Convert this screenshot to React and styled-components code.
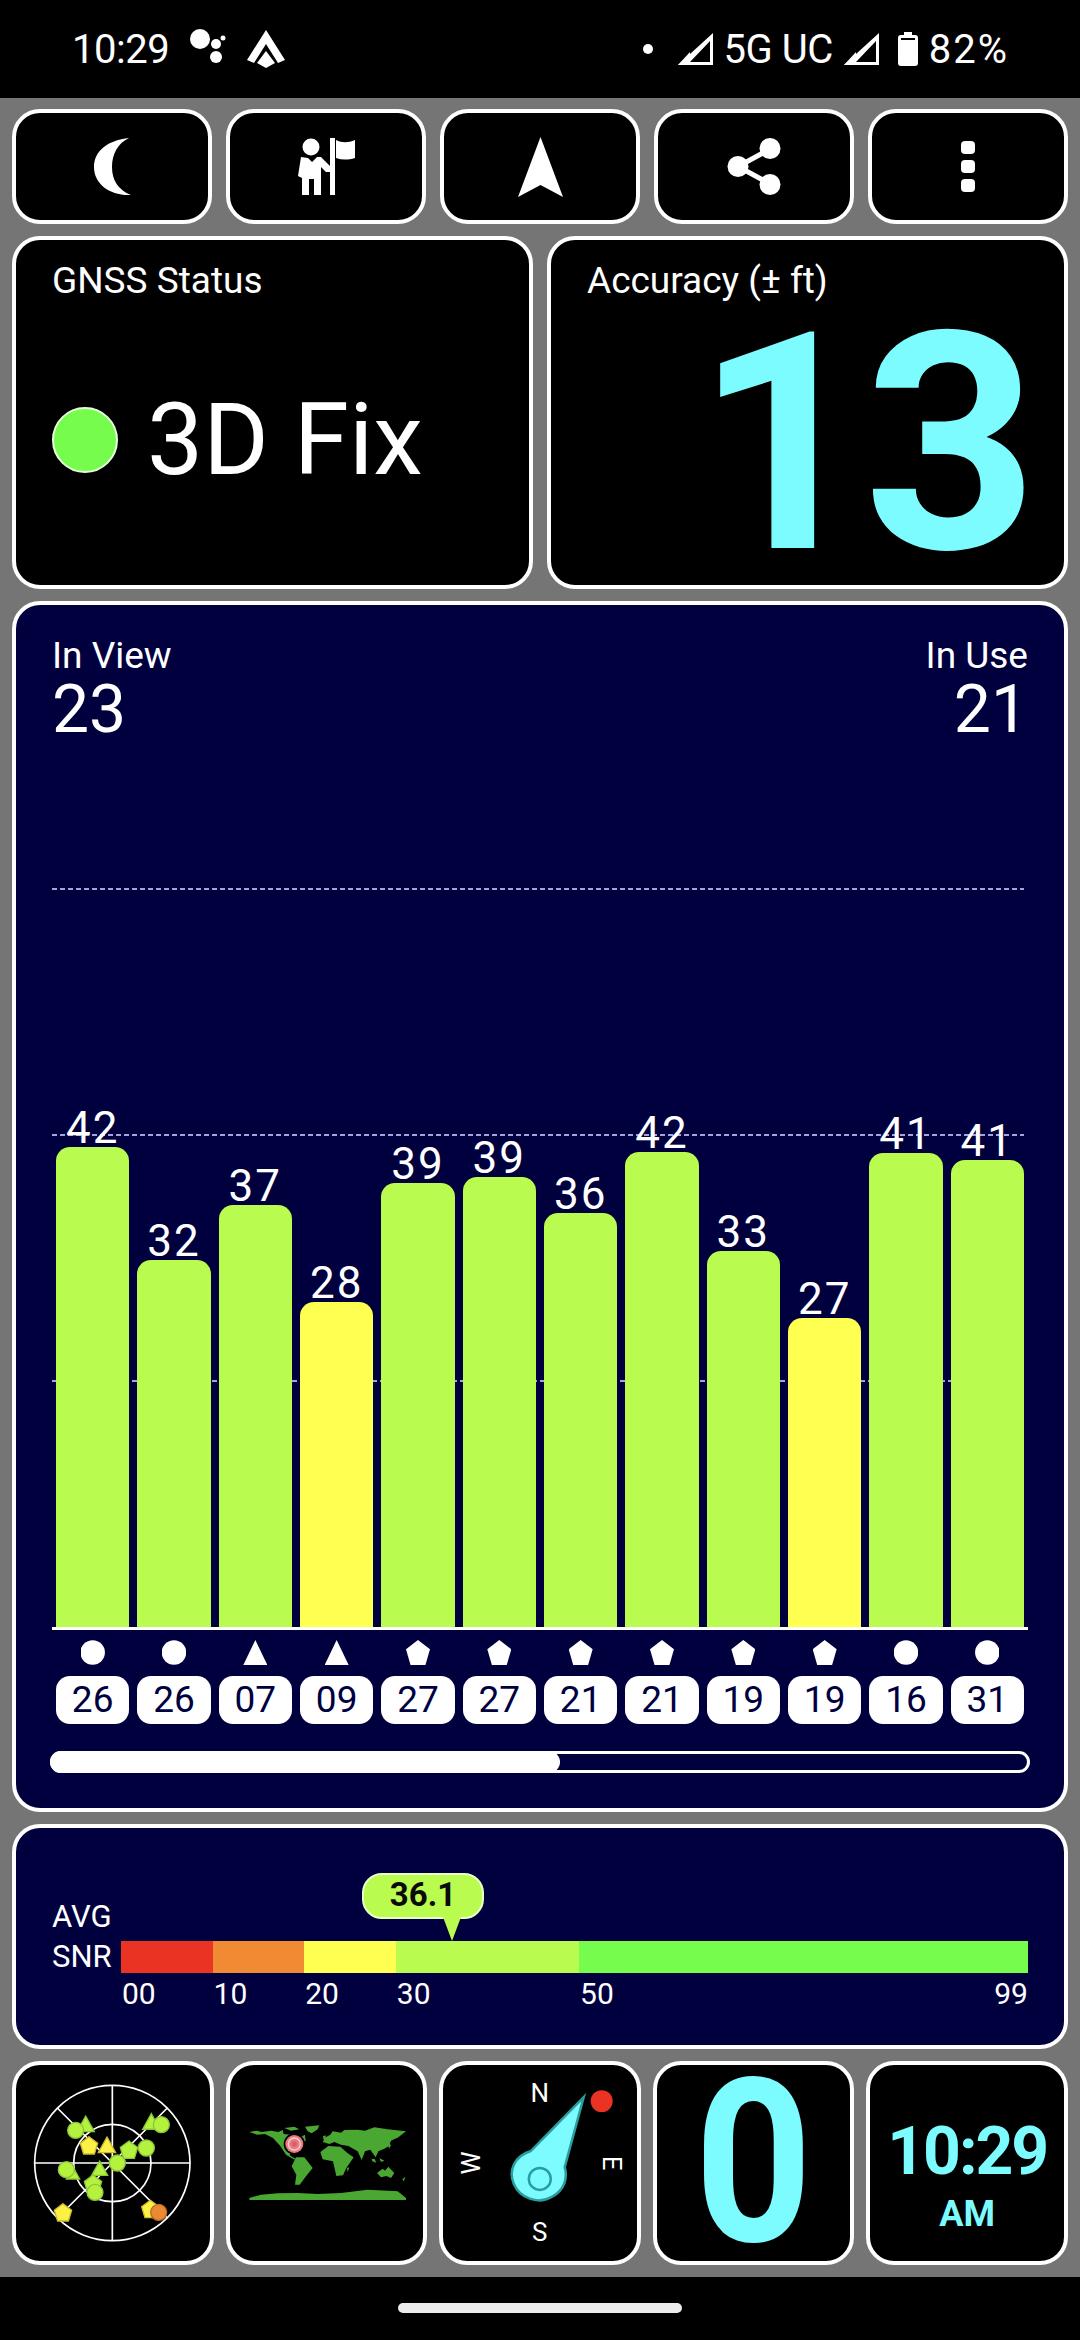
import React from "react"
import styled, { createGlobalStyle } from "styled-components"

const GlobalStyle = createGlobalStyle`
  html, body { margin: 0; padding: 0; background: #000; }
  * { box-sizing: border-box; }
  body { font-family: Roboto, "Liberation Sans", sans-serif; color: #fff; }
`

const Page = styled.div`
  width: 1080px;
  height: 2340px;
  display: flex;
  flex-direction: column;
  background: #000;
`

const StatusBar = styled.div`
  height: 98px;
  flex: none;
  display: flex;
  align-items: center;
  justify-content: space-between;
  padding: 0 71px 0 72px;
  font-size: 40px;
`

const StatusGroup = styled.div`
  display: flex;
  align-items: center;
`

const StatusText = styled.span`
  margin: ${(p) => p.$margin || "0"};
  letter-spacing: ${(p) => p.$spacing || "-0.5px"};
`

const Main = styled.div`
  height: 2179px;
  flex: none;
  display: flex;
  flex-direction: column;
  gap: 12px;
  padding: 11px 12px 12px;
  background: #757575;
`

const Row = styled.div`
  display: grid;
  grid-template-columns: repeat(${(p) => p.$cols}, 1fr);
  grid-template-rows: minmax(0, 1fr);
  gap: ${(p) => p.$gap}px;
  height: ${(p) => p.$height}px;
  flex: none;
`

const Card = styled.div`
  border: 4px solid #fff;
  border-radius: 28px;
  background: #000;
  min-width: 0;
`

const IconCard = styled(Card)`
  display: flex;
  align-items: center;
  justify-content: center;
`

const StatCard = styled(Card)`
  display: flex;
  flex-direction: column;
  padding: 20px 36px 0;
`

const Caption = styled.div`
  font-size: 37px;
  line-height: 42px;
  text-align: ${(p) => p.$align || "left"};
`

const FixRow = styled.div`
  display: flex;
  align-items: center;
  margin-top: 88px;
  gap: 29px;
`

const FixDot = styled.div`
  width: 66px;
  height: 66px;
  border-radius: 50%;
  background: #76fc4c;
  border: 2px solid #e6ffe0;
`

const FixText = styled.div`
  font-size: 100px;
  line-height: 100px;
`

const AccuracyValue = styled.div`
  margin: 27px -4px 0 0;
  font-size: 304px;
  line-height: 230px;
  font-weight: 700;
  text-align: right;
  color: #7dfcff;
  letter-spacing: -6px;
`

const NavyCard = styled(Card)`
  background: #00003f;
`

const ChartCard = styled(NavyCard)`
  height: 1211px;
  flex: none;
  padding: 30px 36px 0;
`

const ChartHeader = styled.div`
  display: flex;
  justify-content: space-between;
`

const Count = styled.div`
  font-size: 66px;
  line-height: 66px;
  text-align: ${(p) => p.$align || "left"};
`

const Plot = styled.div`
  position: relative;
  height: 742px;
  margin-top: 145px;
  padding: 0 4px;
  border-bottom: 3px solid #fff;
  display: grid;
  grid-template-columns: repeat(12, 1fr);
  gap: 8px;
  align-items: end;
`

const GridLine = styled.div`
  position: absolute;
  left: 0;
  right: 4px;
  top: ${(p) => p.$top}px;
  height: 2px;
  background: repeating-linear-gradient(90deg, #a3a3e0 0 5px, transparent 5px 8px);
`

const BarColumn = styled.div`
  position: relative;
  display: flex;
  flex-direction: column;
  align-items: center;
`

const BarValue = styled.div`
  position: relative;
  font-size: 44px;
  line-height: 44px;
  letter-spacing: 2px;
  margin-bottom: -3px;
`

const Bar = styled.div`
  width: 100%;
  height: ${(p) => p.$height}px;
  border-radius: 14px 14px 0 0;
  background: ${(p) => (p.$weak ? "#ffff52" : "#b9fc4f")};
`

const SatGrid = styled.div`
  display: grid;
  grid-template-columns: repeat(12, 1fr);
  gap: 8px;
  padding: 0 4px;
  margin-top: 10px;
`

const Sat = styled.div`
  display: flex;
  flex-direction: column;
  align-items: center;
`

const clips = {
  circle: "circle(50%)",
  triangle: "polygon(50% 0, 100% 100%, 0 100%)",
  pentagon: "polygon(50% 0, 100% 37%, 81% 100%, 19% 100%, 0 37%)",
}

const SatShape = styled.div`
  width: 24px;
  height: 25px;
  background: #fff;
  clip-path: ${(p) => clips[p.$shape]};
`

const SatChip = styled.div`
  width: 100%;
  height: 48px;
  margin-top: 11px;
  border-radius: 14px;
  background: #fff;
  color: #00003f;
  font-size: 37px;
  line-height: 48px;
  text-align: center;
`

const Slider = styled.div`
  height: 22px;
  margin: 27px -2px 0;
  border: 3px solid #fff;
  border-radius: 11px;
`

const SliderFill = styled.div`
  width: 510px;
  height: 22px;
  margin: -3px 0 0 -3px;
  border-radius: 11px;
  background: #fff;
`

const SnrCard = styled(NavyCard)`
  height: 225px;
  flex: none;
  display: flex;
  padding: 73px 36px 0;
`

const SnrLabels = styled.div`
  width: 69px;
  flex: none;
  margin-top: -4px;
  font-size: 31px;
  line-height: 40px;
`

const SnrScale = styled.div`
  position: relative;
  flex: 1;
  display: flex;
  margin-top: 40px;
  height: 70px;
`

const SnrCell = styled.div`
  flex: ${(p) => p.$span};
`

const SnrSwatch = styled.div`
  height: 32px;
  background: ${(p) => p.$color};
`

const SnrTicks = styled.div`
  display: flex;
  justify-content: space-between;
  font-size: 30px;
  line-height: 36px;
  margin-top: 3px;
  padding-left: 1px;
`

const Bubble = styled.div`
  position: absolute;
  left: 241px;
  top: -68px;
  width: 122px;
  height: 46px;
  border-radius: 20px;
  border: 2px solid #eaffc8;
  background: #b9fc4f;
  color: #0a0a0a;
  font-size: 33px;
  font-weight: 700;
  line-height: 40px;
  text-align: center;
  &::after {
    content: "";
    position: absolute;
    left: 79px;
    top: 42px;
    border-style: solid;
    border-width: 24px 9px 0;
    border-color: #b9fc4f transparent transparent;
  }
`

const BigZero = styled.div`
  font-size: 228px;
  line-height: 190px;
  font-weight: 700;
  color: #7dfcff;
  transform: scaleX(0.9);
`

const ClockCard = styled(Card)`
  display: flex;
  flex-direction: column;
  align-items: center;
  color: #7dfcff;
  font-weight: 700;
  padding-top: 51px;
`

const ClockTime = styled.div`
  font-size: 66px;
  line-height: 72px;
  letter-spacing: -2px;
`

const ClockPeriod = styled.div`
  font-size: 36px;
  line-height: 40px;
  margin-top: 6px;
`

const NavBar = styled.div`
  flex: 1;
  display: flex;
  align-items: flex-start;
  justify-content: center;
  padding-top: 26px;
`

const HomeHandle = styled.div`
  width: 284px;
  height: 10px;
  border-radius: 5px;
  background: #ececec;
`

const Moon = () => (
  <svg width="37" height="58" viewBox="0 0 37 58">
    <path fill="#fff" d="M35 0C14 2 0 13 0 29c0 17 16 29 37 28C24 52 18 42 18 29 18 16 24 5 35 0Z" />
  </svg>
)

const PersonFlag = () => (
  <svg width="57" height="58" viewBox="0 0 57 58">
    <circle cx="13" cy="9" r="8.5" fill="#fff" />
    <path fill="#fff" d="M3 19l7 1 4 4 5-5h4l9 9v6l-4 0-5-5v28h-7V41h-5v16H4V40l-4-2Z" />
    <path fill="#fff" d="M32 0h5v57h-5Z" />
    <path fill="#fff" d="M38 2c6 3 12 3 19 0v18c-7 2-13 2-19 0Z" />
  </svg>
)

const NorthArrow = () => (
  <svg width="45" height="60" viewBox="0 0 45 60">
    <path fill="#fff" d="M22.5 0 45 60 22.5 48 0 60Z" />
  </svg>
)

const ShareIcon = () => (
  <svg width="54" height="57" viewBox="0 0 54 57">
    <path stroke="#fff" strokeWidth="5" fill="none" d="M43 11 11 28.5 43 46" />
    <circle cx="43" cy="10.5" r="10.5" fill="#fff" />
    <circle cx="11" cy="28.5" r="10.5" fill="#fff" />
    <circle cx="43" cy="46.5" r="10.5" fill="#fff" />
  </svg>
)

const MoreIcon = () => (
  <svg width="14" height="51" viewBox="0 0 14 51">
    <rect y="0" width="14" height="13" rx="4" fill="#fff" />
    <rect y="19" width="14" height="13" rx="4" fill="#fff" />
    <rect y="38" width="14" height="13" rx="4" fill="#fff" />
  </svg>
)

const AssistantDots = () => (
  <svg width="38" height="40" viewBox="0 0 38 40" style={{ marginLeft: 20 }}>
    <circle cx="11" cy="10" r="10" fill="#fff" />
    <circle cx="27" cy="15" r="5" fill="#fff" />
    <circle cx="34" cy="9" r="2.5" fill="#fff" />
    <circle cx="27" cy="28" r="6" fill="#fff" />
  </svg>
)

const AutoIcon = () => (
  <svg width="38" height="38" viewBox="0 0 38 38" style={{ marginLeft: 20 }}>
    <path fill="#fff" d="M19 0 38 30 31 33 19 14 7 33 0 30Z" />
    <path fill="#fff" d="M19 21 28 33 19 38 10 33Z" />
  </svg>
)

const SignalIcon = () => (
  <svg width="35" height="32" viewBox="0 0 35 32">
    <path fill="#fff" fillRule="evenodd" d="M35 0V32H0ZM32 8 12 29H32Z" />
    <path fill="#fff" d="M0 32 12 19V32Z" />
  </svg>
)

const BatteryIcon = () => (
  <svg width="20" height="34" viewBox="0 0 20 34" style={{ marginLeft: 19 }}>
    <path fill="#fff" d="M6 0h8v3h3a3 3 0 0 1 3 3v25a3 3 0 0 1-3 3H3a3 3 0 0 1-3-3V6a3 3 0 0 1 3-3h3Z" />
    <rect x="3" y="6" width="14" height="2" fill="#000" />
  </svg>
)

const sats = [
  { snr: 42, top: 1147, shape: "circle", id: "26" },
  { snr: 32, top: 1260, shape: "circle", id: "26" },
  { snr: 37, top: 1205, shape: "triangle", id: "07" },
  { snr: 28, top: 1302, shape: "triangle", id: "09", weak: true },
  { snr: 39, top: 1183, shape: "pentagon", id: "27" },
  { snr: 39, top: 1177, shape: "pentagon", id: "27" },
  { snr: 36, top: 1213, shape: "pentagon", id: "21" },
  { snr: 42, top: 1152, shape: "pentagon", id: "21" },
  { snr: 33, top: 1251, shape: "pentagon", id: "19" },
  { snr: 27, top: 1318, shape: "pentagon", id: "19", weak: true },
  { snr: 41, top: 1153, shape: "circle", id: "16" },
  { snr: 41, top: 1160, shape: "circle", id: "31" },
]

const snrBands = [
  { span: 10, color: "#ea3323", ticks: ["00"] },
  { span: 10, color: "#f08a33", ticks: ["10"] },
  { span: 10, color: "#ffff52", ticks: ["20"] },
  { span: 20, color: "#b9fc4f", ticks: ["30"] },
  { span: 49, color: "#76fc4c", ticks: ["50", "99"] },
]

const LIME = "#b4f23e"
const LIME_EDGE = "#8cc63a"
const YELLOW = "#fdf145"
const YELLOW_EDGE = "#c9bd2d"

const triangle = (x, y, s) => `${x},${y - s} ${x + s},${y + s * 0.8} ${x - s},${y + s * 0.8}`
const pentagon = (x, y, s) =>
  `${x},${y - s} ${x + s},${y - s * 0.25} ${x + s * 0.62},${y + s} ${x - s * 0.62},${y + s} ${x - s},${y - s * 0.25}`

const SkyPlot = () => (
  <svg width="166" height="166" viewBox="91 91 498 498">
    <g fill="none" stroke="#fff" strokeWidth="5">
      <circle cx="338" cy="340" r="233" />
      <circle cx="338" cy="340" r="116" />
      <path d="M105 340H571M338 107V573M173 175 503 505M503 175 173 505" />
    </g>
    <g strokeWidth="4">
      <polygon points={triangle(258, 225, 26)} fill={LIME} stroke={LIME_EDGE} />
      <polygon points={triangle(455, 218, 26)} fill={LIME} stroke={LIME_EDGE} />
      <polygon points={triangle(220, 372, 20)} fill={LIME} stroke={LIME_EDGE} />
      <polygon points={triangle(300, 358, 24)} fill={LIME} stroke={LIME_EDGE} />
      <polygon points={pentagon(388, 300, 26)} fill={LIME} stroke={LIME_EDGE} />
      <polygon points={pentagon(280, 402, 26)} fill={LIME} stroke={LIME_EDGE} />
      <polygon points={pentagon(268, 287, 26)} fill={YELLOW} stroke={YELLOW_EDGE} />
      <polygon points={pentagon(190, 488, 26)} fill={YELLOW} stroke={YELLOW_EDGE} />
      <polygon points={pentagon(452, 478, 26)} fill={YELLOW} stroke={YELLOW_EDGE} />
      <polygon points={triangle(322, 288, 26)} fill={YELLOW} stroke={YELLOW_EDGE} />
      <circle cx="228" cy="242" r="24" fill={LIME} stroke={LIME_EDGE} />
      <circle cx="485" cy="225" r="24" fill={LIME} stroke={LIME_EDGE} />
      <circle cx="440" cy="295" r="24" fill={LIME} stroke={LIME_EDGE} />
      <circle cx="353" cy="340" r="24" fill={LIME} stroke={LIME_EDGE} />
      <circle cx="200" cy="360" r="24" fill={LIME} stroke={LIME_EDGE} />
      <circle cx="286" cy="428" r="24" fill={LIME} stroke={LIME_EDGE} />
      <circle cx="477" cy="488" r="24" fill="#e98a33" stroke="#b96c28" />
    </g>
  </svg>
)

const WorldMap = () => (
  <svg width="170" height="90" viewBox="0 0 510 270">
    <g fill="#4aa832">
      <path d="M25 42 48 38 62 42 90 38 112 42 125 36 128 48 150 50 170 62 192 50 194 68 172 80 154 96 146 112 168 125 158 124 135 110 118 84 96 60 72 48 48 50Z" />
      <path d="M130 30 160 26 175 34 150 38ZM192 26 235 22 230 34 212 46 200 40Z" />
      <path d="M165 118 190 118 215 150 195 175 176 200 162 200 166 170 152 145Z" />
      <path d="M245 72 254 58 268 50 275 40 300 44 310 36 350 35 372 38 400 28 440 34 495 40 472 58 450 68 444 84 430 92 412 100 404 118 388 95 372 100 362 126 350 100 322 84 300 80 280 72 265 78Z" />
      <path d="M238 102 262 84 298 86 320 106 338 118 316 150 306 172 286 174 276 130 245 124Z" />
      <path d="M408 165 425 152 432 158 442 146 460 165 450 180 436 174 420 178Z" />
      <path d="M25 240 60 230 110 226 170 225 230 228 300 225 380 215 470 220 495 240V246H25Z" />
      <path d="M392 122 402 124 405 134 394 130ZM415 120 430 128 420 132ZM440 72 450 82 444 92ZM318 150 325 148 320 162ZM246 55 254 52 254 65 248 66ZM484 184 494 176 488 190Z" />
    </g>
    <circle cx="160" cy="78" r="32" fill="#000" />
    <circle cx="160" cy="78" r="27" fill="#e87a80" />
    <circle cx="160" cy="78" r="18" fill="none" stroke="#f7d0d0" strokeWidth="4" />
    <circle cx="160" cy="78" r="8" fill="#d9606a" />
  </svg>
)

const Compass = () => (
  <svg width="194" height="195" viewBox="0 0 194 195">
    <g fill="#fff" fontSize="26" fontFamily="Roboto, sans-serif" textAnchor="middle">
      <text x="97" y="36">N</text>
      <text x="97" y="175">S</text>
      <text transform="translate(37 97) rotate(-90)">W</text>
      <text transform="translate(160 97) rotate(90)">E</text>
    </g>
    <path
      fill="#7dfcff"
      stroke="#2a9d9d"
      strokeWidth="2.5"
      d="M141 31 88 85C72 90 65 104 71 118 77 132 95 139 109 131 122 124 125 112 122 101Z"
    />
    <circle cx="97" cy="113" r="11" fill="none" stroke="#2a9d9d" strokeWidth="2.5" />
    <circle cx="159" cy="35" r="11" fill="#ea3323" />
  </svg>
)

const BAR_BASE = 1627

const App = () => {
  return (
    <Page>
      <GlobalStyle />
      <StatusBar>
        <StatusGroup>
          <StatusText>10:29</StatusText>
          <AssistantDots />
          <AutoIcon />
        </StatusGroup>
        <StatusGroup>
          <svg width="10" height="10" viewBox="0 0 10 10" style={{ marginRight: 25 }}>
            <circle cx="5" cy="5" r="5" fill="#fff" />
          </svg>
          <SignalIcon />
          <StatusText $margin="0 11px 0 11px">5G UC</StatusText>
          <SignalIcon />
          <BatteryIcon />
          <StatusText $margin="0 0 0 11px" $spacing="2px">82%</StatusText>
        </StatusGroup>
      </StatusBar>
      <Main>
        <Row $cols={5} $gap={14} $height={115}>
          <IconCard><Moon /></IconCard>
          <IconCard><PersonFlag /></IconCard>
          <IconCard><NorthArrow /></IconCard>
          <IconCard><ShareIcon /></IconCard>
          <IconCard><MoreIcon /></IconCard>
        </Row>
        <Row $cols={2} $gap={14} $height={353}>
          <StatCard>
            <Caption>GNSS Status</Caption>
            <FixRow>
              <FixDot />
              <FixText>3D Fix</FixText>
            </FixRow>
          </StatCard>
          <StatCard>
            <Caption>Accuracy (± ft)</Caption>
            <AccuracyValue>13</AccuracyValue>
          </StatCard>
        </Row>
        <ChartCard>
          <ChartHeader>
            <div>
              <Caption>In View</Caption>
              <Count>23</Count>
            </div>
            <div>
              <Caption $align="right">In Use</Caption>
              <Count $align="right">21</Count>
            </div>
          </ChartHeader>
          <Plot>
            <GridLine $top={0} />
            <GridLine $top={246} />
            <GridLine $top={492} />
            {sats.map((s, i) => (
              <BarColumn key={i}>
                <BarValue>{s.snr}</BarValue>
                <Bar $height={BAR_BASE - s.top} $weak={s.weak} />
              </BarColumn>
            ))}
          </Plot>
          <SatGrid>
            {sats.map((s, i) => (
              <Sat key={i}>
                <SatShape $shape={s.shape} />
                <SatChip>{s.id}</SatChip>
              </Sat>
            ))}
          </SatGrid>
          <Slider>
            <SliderFill />
          </Slider>
        </ChartCard>
        <SnrCard>
          <SnrLabels>
            AVG
            <br />
            SNR
          </SnrLabels>
          <SnrScale>
            <Bubble>36.1</Bubble>
            {snrBands.map((b) => (
              <SnrCell key={b.color} $span={b.span}>
                <SnrSwatch $color={b.color} />
                <SnrTicks>
                  {b.ticks.map((t) => (
                    <span key={t}>{t}</span>
                  ))}
                </SnrTicks>
              </SnrCell>
            ))}
          </SnrScale>
        </SnrCard>
        <Row $cols={5} $gap={12} $height={204}>
          <IconCard><SkyPlot /></IconCard>
          <IconCard><WorldMap /></IconCard>
          <IconCard><Compass /></IconCard>
          <IconCard><BigZero>0</BigZero></IconCard>
          <ClockCard>
            <ClockTime>10:29</ClockTime>
            <ClockPeriod>AM</ClockPeriod>
          </ClockCard>
        </Row>
      </Main>
      <NavBar>
        <HomeHandle />
      </NavBar>
    </Page>
  )
}

export default App
